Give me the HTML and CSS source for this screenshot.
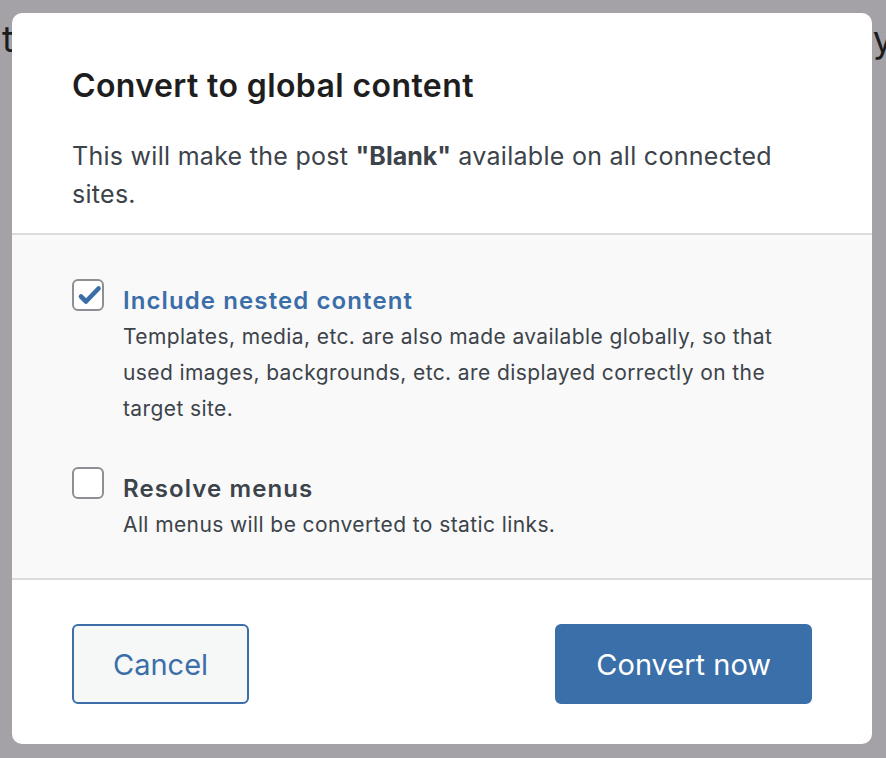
FILE: index.html
```html
<!DOCTYPE html>
<html lang="en">
<head>
<meta charset="utf-8">
<title>Convert to global content</title>
<link rel="stylesheet" href="styles.css">
</head>
<body>
<div class="backdrop-text" aria-hidden="true"><span class="bt-left">t</span><span class="bt-right">y</span></div>
<div class="modal" role="dialog" aria-labelledby="modal-title">
  <div class="modal-header">
    <h1 id="modal-title" class="modal-title">Convert to global content</h1>
    <p class="modal-desc">This will make the post <strong>"Blank"</strong> available on all connected sites.</p>
  </div>
  <div class="modal-body">
    <label class="option">
      <span class="checkbox checked">
        <svg viewBox="0 0 32 32" width="32" height="32" aria-hidden="true"><polyline points="9,17.5 14,22.5 26.5,9.5" fill="none" stroke="#3b6ea8" stroke-width="4.6" stroke-linecap="round" stroke-linejoin="round"/></svg>
      </span>
      <span class="option-text">
        <span class="option-label active">Include nested content</span>
        <span class="option-help">Templates, media, etc. are also made available globally, so that used images, backgrounds, etc. are displayed correctly on the target site.</span>
      </span>
    </label>
    <label class="option">
      <span class="checkbox"></span>
      <span class="option-text">
        <span class="option-label">Resolve menus</span>
        <span class="option-help">All menus will be converted to static links.</span>
      </span>
    </label>
  </div>
  <div class="modal-footer">
    <button class="btn btn-secondary" type="button">Cancel</button>
    <button class="btn btn-primary" type="button">Convert now</button>
  </div>
</div>
</body>
</html>
```

FILE: styles.css
```css
html, body {
  margin: 0;
  padding: 0;
}
body {
  background: #a4a2a7;
  font-family: Inter, "Noto Sans", "Liberation Sans", sans-serif;
  height: 758px;
  overflow: hidden;
  position: relative;
}
.backdrop-text {
  position: absolute;
  top: 14px;
  left: 0;
  right: 0;
  height: 50px;
  font-size: 36px;
  line-height: 50px;
  color: #1c1c1e;
}
.bt-left {
  position: absolute;
  left: 2px;
}
.bt-right {
  position: absolute;
  right: -7px;
}
.modal {
  position: relative;
  margin: 13px 0 0 12px;
  width: 860px;
  height: 731px;
  background: #fff;
  border-radius: 10px;
  overflow: hidden;
  display: flex;
  flex-direction: column;
}
.modal-header {
  padding: 53px 60px 20px 60px;
}
.modal-title {
  margin: 0;
  font-size: 32px;
  line-height: 40px;
  font-weight: 600;
  letter-spacing: 0.4px;
  color: #1e1e1e;
}
.modal-desc {
  margin: 31px 0 0 0;
  font-size: 25px;
  line-height: 38px;
  letter-spacing: 0.28px;
  color: #3c434a;
}
.modal-desc strong {
  font-weight: 700;
  letter-spacing: 0;
}
.modal-body {
  background: #f9f9f9;
  border-top: 2px solid #dcdcde;
  border-bottom: 2px solid #dcdcde;
  padding: 46px 60px 35px 60px;
  display: flex;
  flex-direction: column;
  gap: 42px;
}
.option {
  display: flex;
  align-items: flex-start;
  gap: 19px;
}
.checkbox {
  flex: none;
  box-sizing: border-box;
  width: 32px;
  height: 32px;
  margin-top: -2px;
  border: 2px solid #8c8f94;
  border-radius: 6px;
  background: #fff;
  position: relative;
}
.checkbox svg {
  position: absolute;
  left: -2px;
  top: -2px;
}
.option-text {
  display: flex;
  flex-direction: column;
}
.option-label {
  font-size: 24px;
  line-height: 40px;
  font-weight: 600;
  letter-spacing: 1.1px;
  color: #3c434a;
}
.option-label.active {
  color: #3b6ea8;
}
.option-help {
  font-size: 21px;
  line-height: 36px;
  letter-spacing: 0.4px;
  color: #3c434a;
  margin-top: -2px;
}
.modal-footer {
  flex: 1;
  display: flex;
  justify-content: space-between;
  align-items: flex-start;
  padding: 44px 60px 0 60px;
}
.btn {
  box-sizing: border-box;
  height: 80px;
  padding: 0 39px;
  border-radius: 6px;
  font-family: inherit;
  font-size: 29px;
  font-weight: 400;
  cursor: pointer;
}
.btn-secondary {
  background: #f6f7f7;
  border: 2px solid #3b6ea8;
  color: #3b6ea8;
}
.btn-primary {
  background: #3b6fa9;
  border: 2px solid #3b6fa9;
  color: #fff;
}
```
